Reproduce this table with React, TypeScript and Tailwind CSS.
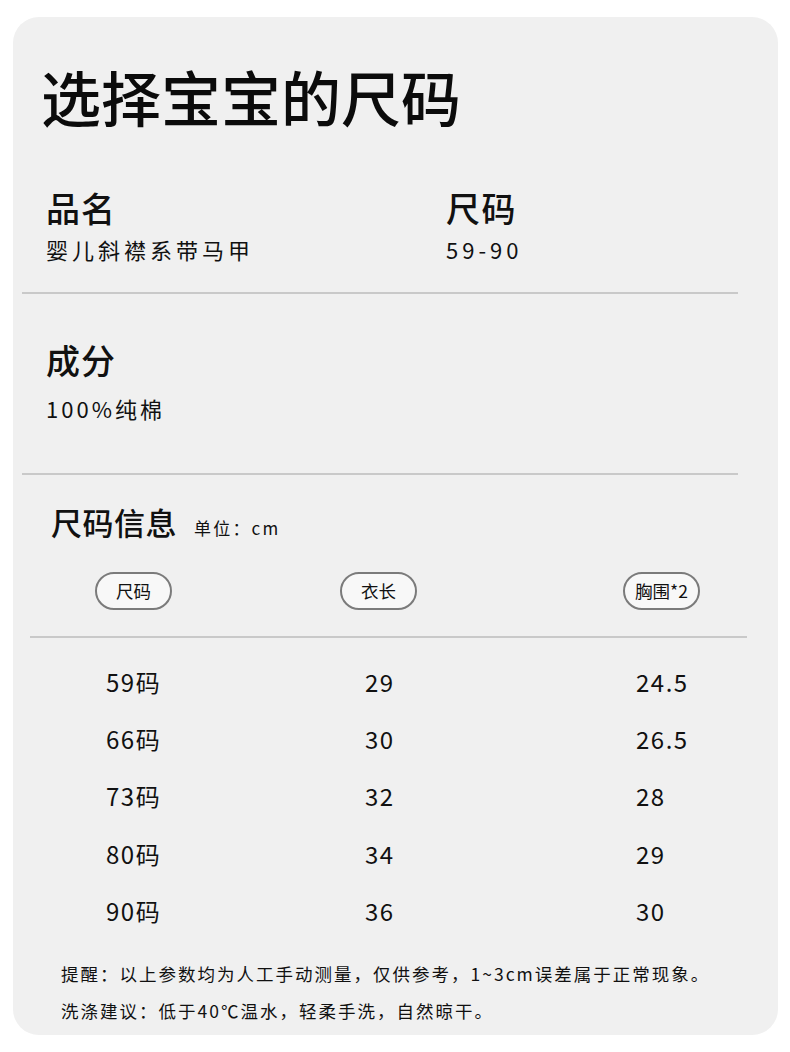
import React from "react";

const FONT = { fontFamily: '"Noto Sans CJK SC", "Noto Sans", sans-serif' };

const rows = [
  ["59码", "29", "24.5"],
  ["66码", "30", "26.5"],
  ["73码", "32", "28"],
  ["80码", "34", "29"],
  ["90码", "36", "30"],
];

function Pill({ label }: { label: string }) {
  return (
    <div className="flex h-[38px] w-[77px] items-center justify-center rounded-full border-2 border-[#7b7b7b] bg-[#f8f8f8] text-[17.5px] leading-none text-[#111]">
      {label}
    </div>
  );
}

export default function App() {
  return (
    <div className="min-h-[1052px] w-[790px] bg-white pt-[17px]" style={FONT}>
      <div className="ml-[13px] flex h-[1018px] w-[765px] flex-col rounded-[26px] bg-[#f0f0f0] text-[#111]">
        <h1 className="ml-[28px] mt-[49px] h-[60px] text-[60px] font-medium leading-[60px] tracking-[0px] text-[#0b0b0b]">
          选择宝宝的尺码
        </h1>

        <div className="mt-[62px] flex">
          <div className="ml-[33px] w-[400px]">
            <div className="h-[40px] text-[34px] font-medium leading-[40px] tracking-[1px]">品名</div>
            <div className="mt-[7px] h-[28px] text-[22px] leading-[28px] tracking-[4px]">婴儿斜襟系带马甲</div>
          </div>
          <div>
            <div className="h-[40px] text-[34px] font-medium leading-[40px] tracking-[1.5px]">尺码</div>
            <div className="mt-[7px] h-[28px] text-[22px] leading-[28px] tracking-[4px]">59-90</div>
          </div>
        </div>

        <div className="ml-[9px] mt-[29px] h-[2px] w-[716px] bg-[#c9c9c9]" />

        <div className="ml-[33px] mt-[46px]">
          <div className="h-[40px] text-[34px] font-medium leading-[40px] tracking-[1px]">成分</div>
          <div className="mt-[14px] h-[28px] text-[22px] leading-[28px] tracking-[3px]">100%纯棉</div>
        </div>

        <div className="ml-[9px] mt-[51px] h-[2px] w-[716px] bg-[#c9c9c9]" />

        <div className="ml-[38px] mt-[29px] flex h-[36px] items-baseline">
          <span className="text-[31px] font-medium leading-[36px] tracking-[0.5px]">尺码信息</span>
          <span className="ml-[17px] text-[17px] leading-[36px] tracking-[2.2px]">单位：cm</span>
        </div>

        <div className="mt-[32px] flex">
          <div className="ml-[82px]">
            <Pill label="尺码" />
          </div>
          <div className="ml-[168px]">
            <Pill label="衣长" />
          </div>
          <div className="ml-[206px]">
            <Pill label="胸围*2" />
          </div>
        </div>

        <div className="ml-[17px] mt-[26px] h-[2px] w-[717px] bg-[#c9c9c9]" />

        <div className="mt-[15px] flex flex-col">
          {rows.map((r) => (
            <div key={r[0]} className="flex h-[57.3px] items-center text-[24px] leading-none tracking-[1.5px]">
              <div className="ml-[93px] w-[259px]">{r[0]}</div>
              <div className="w-[271px]">{r[1]}</div>
              <div>{r[2]}</div>
            </div>
          ))}
        </div>

        <div className="ml-[48px] mt-[16px] text-[17.5px] leading-[37px] tracking-[2px] text-[#111]">
          <div>提醒：以上参数均为人工手动测量，仅供参考，1~3cm误差属于正常现象。</div>
          <div>洗涤建议：低于40℃温水，轻柔手洗，自然晾干。</div>
        </div>
      </div>
    </div>
  );
}
